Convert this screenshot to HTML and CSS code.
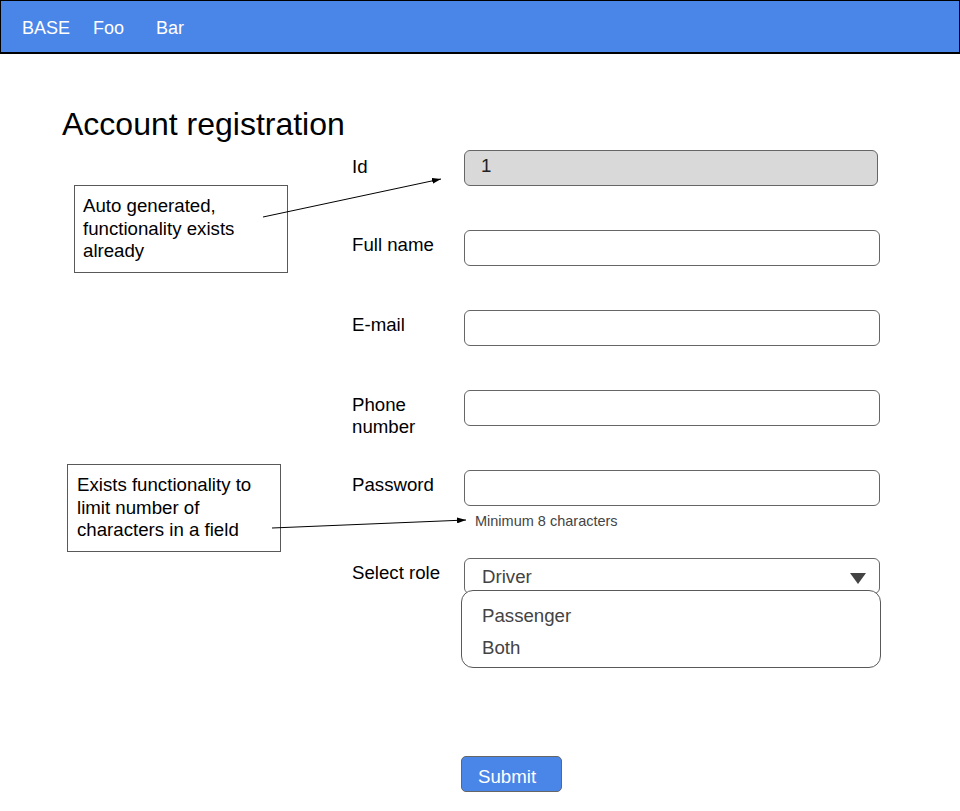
FILE: index.html
```html
<!DOCTYPE html>
<html>
<head>
<meta charset="utf-8">
<link rel="stylesheet" href="styles.css">
</head>
<body>
<header class="topbar">
  <span class="nav-item">BASE</span>
  <span class="nav-item nav-foo">Foo</span>
  <span class="nav-item nav-bar">Bar</span>
</header>
<main class="page">
  <h1 class="title">Account registration</h1>
  <form class="form">
    <div class="row">
      <label class="label label-id">Id</label>
      <div class="input input-readonly">1</div>
    </div>
    <div class="row">
      <label class="label">Full name</label>
      <div class="input"></div>
    </div>
    <div class="row">
      <label class="label">E-mail</label>
      <div class="input"></div>
    </div>
    <div class="row">
      <label class="label">Phone<br>number</label>
      <div class="input"></div>
    </div>
    <div class="row row-password">
      <label class="label">Password</label>
      <div class="field">
        <div class="input"></div>
        <div class="hint">Minimum 8 characters</div>
      </div>
    </div>
    <div class="row row-select">
      <label class="label">Select role</label>
      <div class="select">
        <span class="select-value">Driver</span>
        <span class="caret"></span>
        <div class="dropdown">
          <div class="option">Passenger</div>
          <div class="option">Both</div>
        </div>
      </div>
    </div>
    <button type="button" class="submit">Submit</button>
  </form>
</main>

<div class="note note-auto">Auto generated,<br>functionality exists<br>already</div>
<div class="note note-limit">Exists functionality to<br>limit number of<br>characters in a field</div>

<svg class="arrows" width="960" height="811" viewBox="0 0 960 811">
  <defs>
    <marker id="head" markerWidth="9" markerHeight="6" refX="9" refY="3" orient="auto" markerUnits="userSpaceOnUse">
      <path d="M0,0 L9,3 L0,6 Z" fill="#000"/>
    </marker>
  </defs>
  <line x1="263" y1="217" x2="441" y2="179" stroke="#000" stroke-width="1" marker-end="url(#head)"/>
  <line x1="272" y1="528" x2="466" y2="520" stroke="#000" stroke-width="1" marker-end="url(#head)"/>
</svg>
</body>
</html>
```

FILE: styles.css
```css
* { box-sizing: border-box; }

html, body {
  margin: 0;
  padding: 0;
  background: #fff;
}

body {
  position: relative;
  width: 960px;
  height: 811px;
  overflow: hidden;
  font-family: "Liberation Sans", Arial, sans-serif;
  font-size: 18.67px;
  color: #000;
}

.topbar {
  display: flex;
  align-items: center;
  height: 54px;
  padding-left: 21px;
  padding-top: 4px;
  background: #4a86e8;
  border: 1px solid #000;
  border-bottom-width: 2px;
  color: #fff;
  font-size: 18px;
}

.nav-foo { margin-left: 23px; }
.nav-bar { margin-left: 32px; }

.page {
  padding-left: 62px;
}

.title {
  margin: 52px 0 0 0;
  font-size: 32px;
  font-weight: normal;
  line-height: 37px;
}

.form {
  margin-top: 7px;
  padding-left: 290px;
}

.row {
  display: flex;
  align-items: flex-start;
  height: 80px;
}

.label {
  width: 112px;
  padding-top: 4px;
  line-height: 22px;
}

.label-id { padding-top: 6px; }

.input {
  width: 416px;
  height: 36px;
  border: 1px solid #666;
  border-radius: 6px;
  background: #fff;
}

.input-readonly {
  width: 414px;
  background: #d9d9d9;
  padding-left: 16px;
  padding-top: 4px;
  line-height: 22px;
  color: #222;
}

.row-password { height: auto; }

.field {
  display: flex;
  flex-direction: column;
}

.hint {
  margin-top: 7px;
  padding-left: 11px;
  font-size: 14.5px;
  line-height: 16px;
  color: #444;
}

.row-select {
  margin-top: 29px;
  height: auto;
}

.select {
  position: relative;
  width: 416px;
  height: 36px;
  border: 1px solid #666;
  border-radius: 6px;
  padding-left: 17px;
  padding-top: 7px;
  line-height: 22px;
  color: #434343;
}

.caret {
  position: absolute;
  right: 13px;
  top: 14px;
  width: 0;
  height: 0;
  border-left: 8.5px solid transparent;
  border-right: 8.5px solid transparent;
  border-top: 11px solid #434343;
}

.dropdown {
  position: absolute;
  left: -4px;
  top: 31px;
  width: 420px;
  height: 78px;
  border: 1px solid #595959;
  border-radius: 12px;
  background: #fff;
  padding-top: 9px;
  padding-left: 20px;
}

.option {
  line-height: 32px;
  color: #434343;
}

.submit {
  display: block;
  margin-top: 162px;
  margin-left: 109px;
  width: 101px;
  height: 36px;
  padding: 6px 0 0 16px;
  text-align: left;
  background: #4a86e8;
  border: 1px solid #666;
  border-radius: 5px;
  color: #fff;
  font-family: "Liberation Sans", Arial, sans-serif;
  font-size: 18.67px;
  line-height: 22px;
}

.note {
  position: absolute;
  width: 214px;
  height: 88px;
  border: 1px solid #595959;
  background: #fff;
  line-height: 22.5px;
  padding-top: 9px;
}

.note-auto {
  left: 74px;
  top: 185px;
  padding-left: 8px;
}

.note-limit {
  left: 67px;
  top: 464px;
  padding-left: 9px;
}

.arrows {
  position: absolute;
  left: 0;
  top: 0;
  pointer-events: none;
}
```
